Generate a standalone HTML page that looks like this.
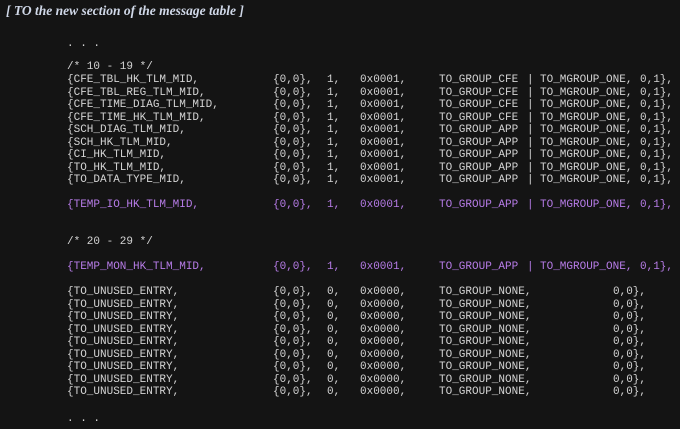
<!DOCTYPE html>
<html><head><meta charset="utf-8"><style>
body{margin:0;width:680px;height:429px;background:#141414;overflow:hidden;position:relative;font-family:"Liberation Mono",monospace;font-size:11px;color:#d4d4d4}
.t{position:absolute;left:6px;top:3px;font-family:"Liberation Serif",serif;font-weight:bold;font-style:italic;font-size:13.5px;color:#d0d8e8}
.r{position:absolute;left:0;height:13px;line-height:13px;white-space:pre}
.r span{position:absolute;top:0}
.p{color:#b77ce8}
</style></head><body>
<div class="t">[ TO the new section of the message table ]</div>
<div id="c"></div>
<script>
var c=document.getElementById('c');
function row(top,cols,cls){var d=document.createElement('div');d.className='r'+(cls?' '+cls:'');d.style.top=top+'px';
cols.forEach(function(x){var s=document.createElement('span');s.style.left=x[0]+'px';s.textContent=x[1];d.appendChild(s)});c.appendChild(d);}
row(38,[[67,'. . .']]);
row(61,[[67,'/* 10 - 19 */']]);
var a=[['CFE_TBL_HK_TLM_MID','CFE'],['CFE_TBL_REG_TLM_MID','CFE'],['CFE_TIME_DIAG_TLM_MID','CFE'],['CFE_TIME_HK_TLM_MID','CFE'],['SCH_DIAG_TLM_MID','APP'],['SCH_HK_TLM_MID','APP'],['CI_HK_TLM_MID','APP'],['TO_HK_TLM_MID','APP'],['TO_DATA_TYPE_MID','APP']];
function full(top,n,g,cls){row(top,[[67,'{'+n+','],[273,'{0,0},'],[327,'1,'],[360,'0x0001,'],[439,'TO_GROUP_'+g],[527,'|'],[540,'TO_MGROUP_ONE,'],[640,'0,1},']],cls);}
a.forEach(function(e,i){full(74+i*12.5,e[0],e[1]);});
full(199,'TEMP_IO_HK_TLM_MID','APP','p');
row(236,[[67,'/* 20 - 29 */']]);
full(261,'TEMP_MON_HK_TLM_MID','APP','p');
for(var i=0;i<9;i++)row(286+i*12.5,[[67,'{TO_UNUSED_ENTRY,'],[273,'{0,0},'],[327,'0,'],[360,'0x0000,'],[439,'TO_GROUP_NONE,'],[613,'0,0},']]);
row(413,[[67,'. . .']]);
</script>
</body></html>
